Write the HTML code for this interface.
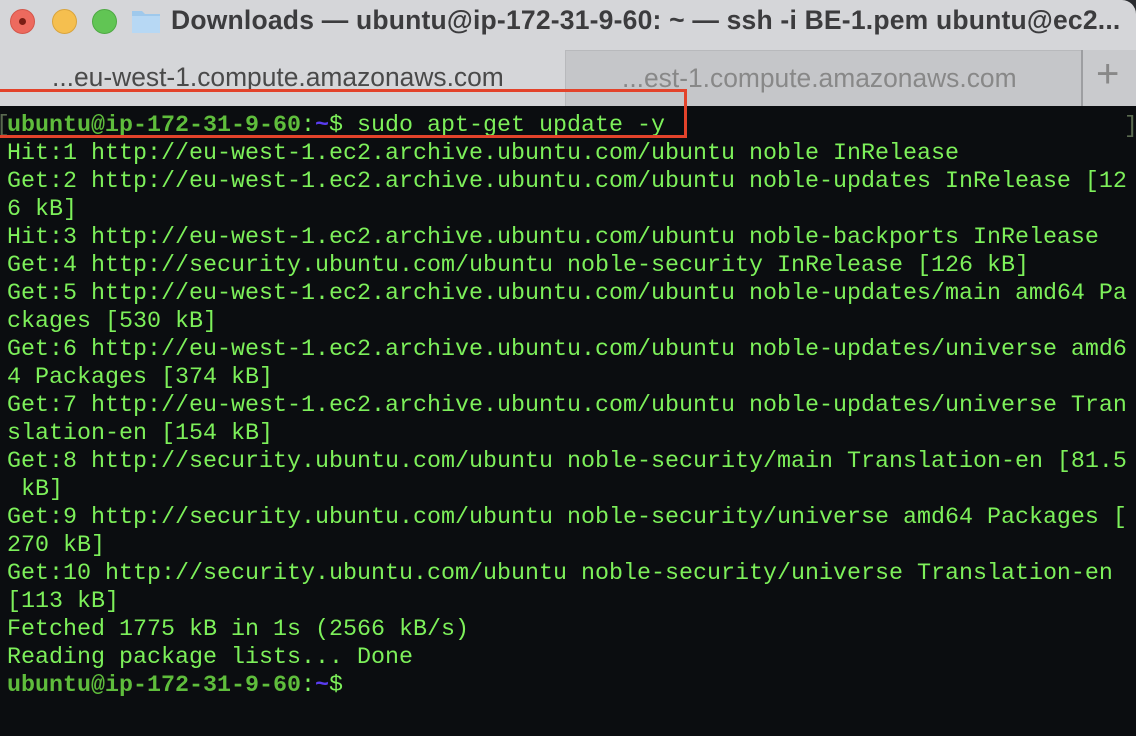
<!DOCTYPE html>
<html><head><meta charset="utf-8"><style>
*{margin:0;padding:0;box-sizing:border-box}
body{width:1136px;height:736px;overflow:hidden;background:#2a2c30;font-family:"Liberation Sans",sans-serif;position:relative}
.win{position:absolute;left:0;top:0;width:1136px;height:736px;background:#0b0d10;border-top-right-radius:14px;overflow:hidden}
.title{position:absolute;left:0;top:0;width:1136px;height:50px;background:#d5d6d9}
.dot{position:absolute;top:9px;width:25px;height:25px;border-radius:50%}
.ttext{position:absolute;left:171px;top:5px;font-size:26.5px;font-weight:bold;color:#3c3c3e;white-space:nowrap;letter-spacing:0.2px}
.tabs{position:absolute;left:0;top:50px;width:1136px;height:56px;background:#d5d6d9}
.tab2{position:absolute;left:565px;top:0;width:516px;height:56px;background:#c5c6c9;border-left:1px solid #b8b9bc;border-top:1px solid #b8b9bc}
.plus{position:absolute;left:1081px;top:0;width:55px;height:56px;background:#c9cacd;border-left:2px solid #9d9ea1}
.tabt{position:absolute;top:12px;font-size:26.4px;color:#555;white-space:nowrap}
.term{position:absolute;left:7px;top:112px;font-family:"Liberation Mono",monospace;font-size:23.33px;line-height:28px;color:#7df05a;white-space:pre}
.p{color:#5fbd3c;font-weight:bold}
.t{color:#5a3cf0;font-weight:bold}
.red{position:absolute;left:-3px;top:89px;width:690px;height:49px;border:3px solid #e3432b}
</style></head><body>
<div class="win">
<div class="title">
<div class="dot" style="left:10px;background:#ed6a5e;border:1px solid #d4564a"><div style="position:absolute;left:8px;top:8px;width:7px;height:7px;border-radius:50%;background:#7a1d14"></div></div>
<div class="dot" style="left:52px;background:#f5bf4f;border:1px solid #d9a43c"></div>
<div class="dot" style="left:92px;background:#61c554;border:1px solid #4ea943"></div>
<svg style="position:absolute;left:131px;top:8px" width="30" height="26"><path d="M1 3h10l3 3h15v19H1z" fill="#9fc9ec"/><path d="M1 8h28v17H1z" fill="#b7d8f4"/></svg>
<div class="ttext">Downloads — ubuntu@ip-172-31-9-60: ~ — ssh -i BE-1.pem ubuntu@ec2...</div>
</div>
<div class="tabs">
<div class="tabt" style="left:52px;color:#4a4a4a">...eu-west-1.compute.amazonaws.com</div>
<div class="tab2"><div class="tabt" style="left:56px;color:#888">...est-1.compute.amazonaws.com</div></div>
<div class="plus"><div style="position:absolute;left:13px;top:2px;font-size:40px;color:#888;font-weight:300">+</div></div>
</div>
<div style="position:absolute;left:-4px;top:112px;font-family:'Liberation Mono',monospace;font-size:23.33px;line-height:28px;color:#5a6a50">[</div>
<div class="term"><span class="p">ubuntu@ip-172-31-9-60</span>:<span class="t">~</span>$ sudo apt-get update -y
Hit:1 http://eu-west-1.ec2.archive.ubuntu.com/ubuntu noble InRelease
Get:2 http://eu-west-1.ec2.archive.ubuntu.com/ubuntu noble-updates InRelease [12
6 kB]
Hit:3 http://eu-west-1.ec2.archive.ubuntu.com/ubuntu noble-backports InRelease
Get:4 http://security.ubuntu.com/ubuntu noble-security InRelease [126 kB]
Get:5 http://eu-west-1.ec2.archive.ubuntu.com/ubuntu noble-updates/main amd64 Pa
ckages [530 kB]
Get:6 http://eu-west-1.ec2.archive.ubuntu.com/ubuntu noble-updates/universe amd6
4 Packages [374 kB]
Get:7 http://eu-west-1.ec2.archive.ubuntu.com/ubuntu noble-updates/universe Tran
slation-en [154 kB]
Get:8 http://security.ubuntu.com/ubuntu noble-security/main Translation-en [81.5
 kB]
Get:9 http://security.ubuntu.com/ubuntu noble-security/universe amd64 Packages [
270 kB]
Get:10 http://security.ubuntu.com/ubuntu noble-security/universe Translation-en
[113 kB]
Fetched 1775 kB in 1s (2566 kB/s)
Reading package lists... Done
<span class="p">ubuntu@ip-172-31-9-60</span>:<span class="t">~</span>$</div>
<div style="position:absolute;left:1124px;top:112px;font-family:'Liberation Mono',monospace;font-size:23px;line-height:28px;color:#5a6a50">]</div>
<div class="red"></div>
</div>
</body></html>
